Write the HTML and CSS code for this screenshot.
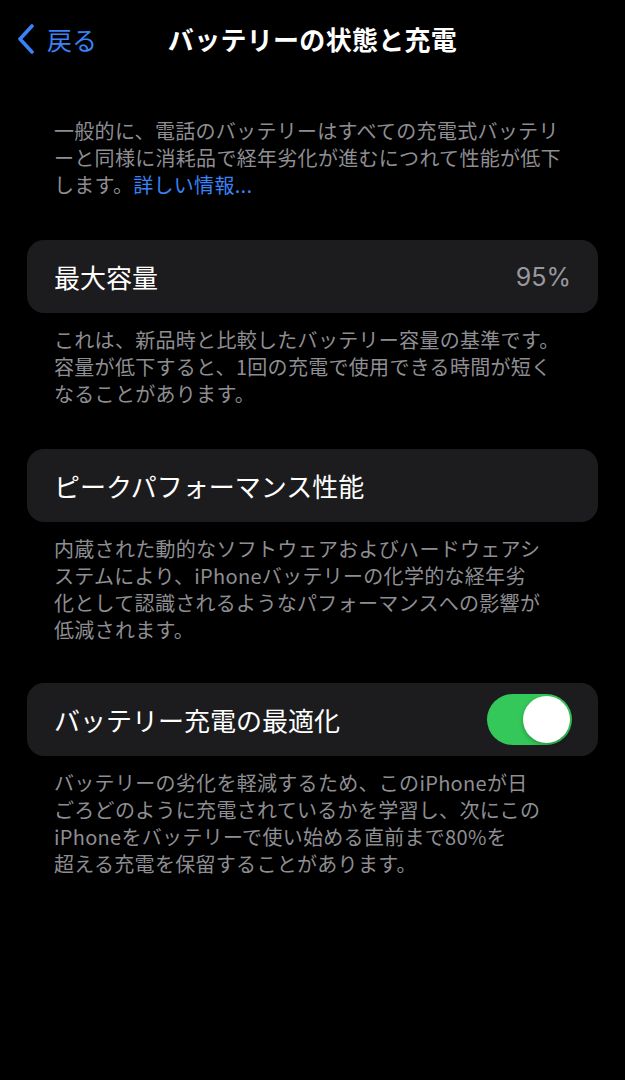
FILE: index.html
```html
<!DOCTYPE html>
<html lang="ja">
<head>
<meta charset="utf-8">
<title>バッテリーの状態と充電</title>
<link rel="stylesheet" href="styles.css">
</head>
<body>
<div class="screen">
  <header class="nav">
    <a class="back">
      <svg class="chev" width="20" height="30" viewBox="0 0 20 30"><path d="M16 2 L4 15 L16 28" fill="none" stroke="#3a82f6" stroke-width="3.6" stroke-linecap="round" stroke-linejoin="round"/></svg>
      <span class="back-label">戻る</span>
    </a>
    <h1 class="title">バッテリーの状態と充電</h1>
    <span class="spacer"></span>
  </header>

  <p class="note intro">一般的に、電話のバッテリーはすべての充電式バッテリ<br>ーと同様に消耗品で経年劣化が進むにつれて性能が低下<br>します。<span class="link">詳しい情報...</span></p>

  <section class="group">
    <div class="card">
      <span class="label">最大容量</span>
      <span class="value">95%</span>
    </div>
    <p class="note">これは、新品時と比較したバッテリー容量の基準です。<br>容量が低下すると、1回の充電で使用できる時間が短く<br>なることがあります。</p>
  </section>

  <section class="group">
    <div class="card">
      <span class="label">ピークパフォーマンス性能</span>
    </div>
    <p class="note">内蔵された動的なソフトウェアおよびハードウェアシ<br>ステムにより、iPhoneバッテリーの化学的な経年劣<br>化として認識されるようなパフォーマンスへの影響が<br>低減されます。</p>
  </section>

  <section class="group last">
    <div class="card">
      <span class="label">バッテリー充電の最適化</span>
      <span class="toggle"><span class="knob"></span></span>
    </div>
    <p class="note">バッテリーの劣化を軽減するため、このiPhoneが日<br>ごろどのように充電されているかを学習し、次にこの<br>iPhoneをバッテリーで使い始める直前まで80%を<br>超える充電を保留することがあります。</p>
  </section>
</div>
</body>
</html>
```

FILE: styles.css
```css
html, body {
  margin: 0;
  padding: 0;
  background: #000;
}
body {
  font-family: "Noto Sans CJK JP", "Noto Sans", sans-serif;
  color: #fff;
  width: 625px;
  height: 1080px;
  overflow: hidden;
}
.screen {
  display: flex;
  flex-direction: column;
}
.nav {
  display: grid;
  grid-template-columns: 1fr auto 1fr;
  align-items: center;
  height: 78px;
}
.back {
  display: flex;
  align-items: center;
  gap: 11px;
  padding-left: 16px;
  color: #3a82f6;
}
.chev {
  display: block;
}
.back-label {
  font-size: 25px;
  line-height: 30px;
}
.title {
  margin: 0;
  font-size: 26px;
  font-weight: 700;
  letter-spacing: 0.3px;
  line-height: 30px;
  color: #fff;
}
.note {
  margin: 0;
  padding: 0 27px 0 54px;
  font-size: 20px;
  letter-spacing: 0.3px;
  line-height: 27px;
  color: #8e8e93;
}
.intro {
  margin-top: 39px;
}
.link {
  color: #3a82f6;
}
.group {
  margin-top: 42px;
  display: flex;
  flex-direction: column;
}
.group + .group {
  margin-top: 42px;
}
.group.last {
  margin-top: 40px;
}
.card {
  margin: 0 27px;
  height: 73px;
  background: #1c1c1e;
  border-radius: 17px;
  display: flex;
  align-items: center;
  justify-content: space-between;
  padding: 0 27px;
  margin-bottom: 13px;
}
.label {
  font-size: 26px;
  line-height: 32px;
  color: #fff;
}
.value {
  font-family: "Inter", "Noto Sans", sans-serif;
  font-size: 25px;
  color: #98989e;
}
.toggle {
  width: 85px;
  height: 51px;
  border-radius: 26px;
  background: #34c759;
  display: flex;
  align-items: center;
  justify-content: flex-end;
  padding: 0 2px;
  box-sizing: border-box;
  margin-right: -1px;
}
.knob {
  width: 47px;
  height: 47px;
  border-radius: 50%;
  background: #fff;
  box-shadow: 0 2px 4px rgba(0,0,0,0.25);
}
```
